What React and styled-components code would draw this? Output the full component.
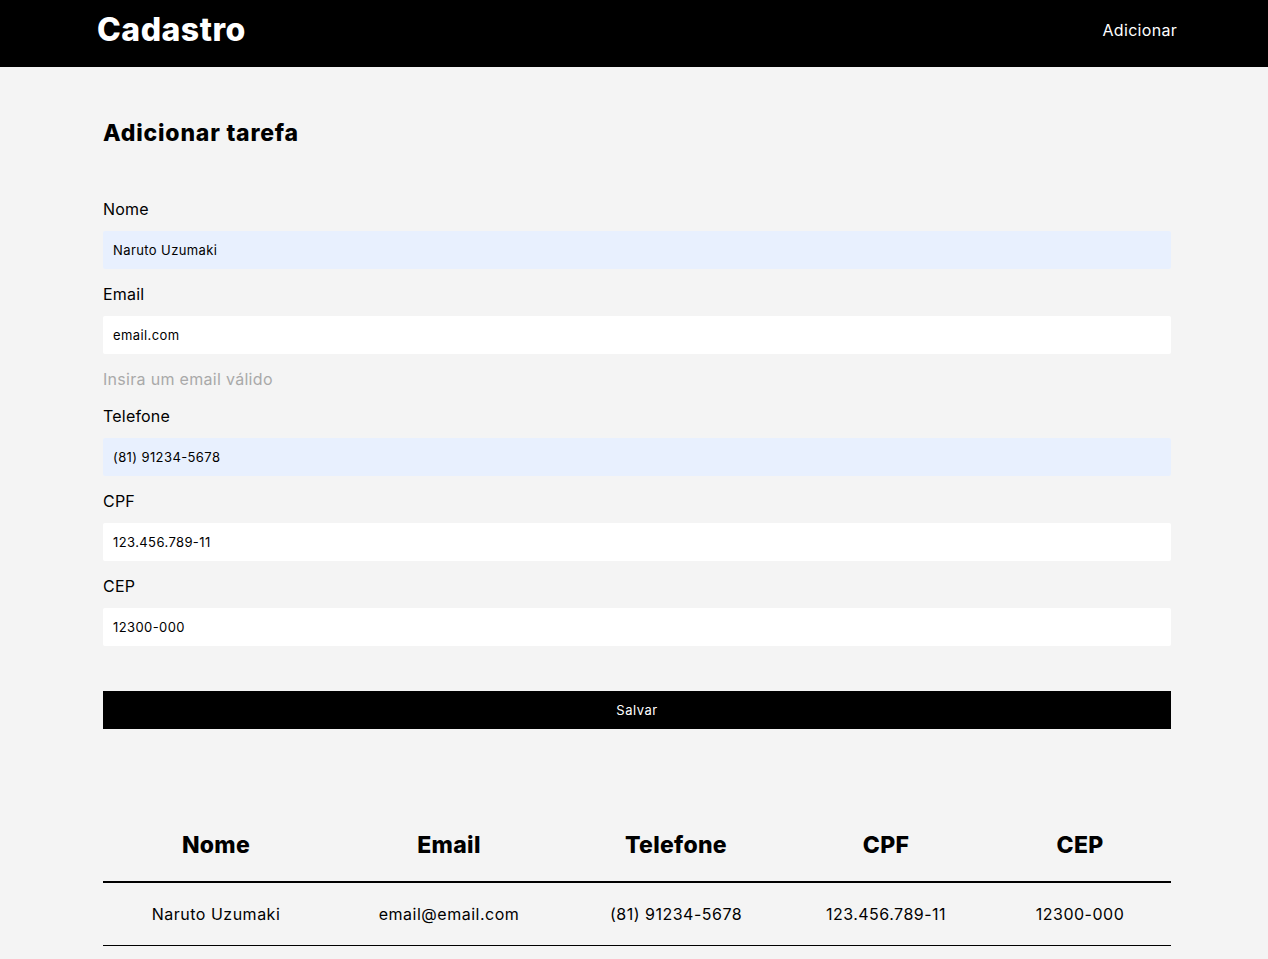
import styled, { createGlobalStyle } from "styled-components";

const GlobalStyle = createGlobalStyle`
  * { box-sizing: border-box; }
  body {
    margin: 0;
    background: #f4f4f4;
    font-family: "Inter", "Lato", sans-serif;
    color: #000;
  }
`;

const fields = [
  { label: "Nome", value: "Naruto Uzumaki", filled: true },
  { label: "Email", value: "email.com", error: "Insira um email válido" },
  { label: "Telefone", value: "(81) 91234-5678", filled: true },
  { label: "CPF", value: "123.456.789-11" },
  { label: "CEP", value: "12300-000" },
];

const columns = ["Nome", "Email", "Telefone", "CPF", "CEP"];
const rows = [
  ["Naruto Uzumaki", "email@email.com", "(81) 91234-5678", "123.456.789-11", "12300-000"],
];

export default function App() {
  return (
    <>
      <GlobalStyle />
      <Header>
        <Logo>Cadastro</Logo>
        <NavLink>Adicionar</NavLink>
      </Header>
      <Main>
        <Title>Adicionar tarefa</Title>
        <Form onSubmit={(e) => e.preventDefault()}>
          {fields.map((f) => (
            <Field key={f.label}>
              <Label>{f.label}</Label>
              <Input $filled={f.filled} defaultValue={f.value} />
              {f.error && <ErrorText>{f.error}</ErrorText>}
            </Field>
          ))}
          <SaveButton type="submit">Salvar</SaveButton>
        </Form>
        <Table>
          <HeadRow>
            {columns.map((c) => (
              <HeadCell key={c}>{c}</HeadCell>
            ))}
          </HeadRow>
          {rows.map((r, i) => (
            <BodyRow key={i}>
              {r.map((v, j) => (
                <Cell key={j}>{v}</Cell>
              ))}
            </BodyRow>
          ))}
        </Table>
      </Main>
    </>
  );
}

const Header = styled.header`
  height: 67px;
  background: #000;
  display: flex;
  align-items: center;
  justify-content: space-between;
  padding: 0 91px 8px 97px;
`;

const Logo = styled.h1`
  margin: 0;
  color: #fff;
  font-size: 32px;
  font-weight: 800;
  letter-spacing: 0.5px;
`;

const NavLink = styled.a`
  color: #fff;
  font-size: 16px;
  letter-spacing: 0.3px;
  cursor: pointer;
`;

const Main = styled.main`
  width: 1068px;
  margin-left: 103px;
  padding-top: 52px;
`;

const Title = styled.h2`
  margin: 0;
  font-size: 23px;
  font-weight: 800;
  letter-spacing: 0.8px;
  line-height: 28px;
`;

const Form = styled.form`
  margin-top: 52px;
  display: flex;
  flex-direction: column;
`;

const Field = styled.div`
  display: flex;
  flex-direction: column;
  margin-bottom: 15px;
`;

const Label = styled.label`
  font-size: 16px;
  letter-spacing: 0.2px;
  line-height: 20px;
  margin-bottom: 12px;
`;

const Input = styled.input`
  height: 38px;
  border: none;
  outline: none;
  border-radius: 2px;
  padding: 0 10px;
  font-family: inherit;
  font-size: 13px;
  letter-spacing: 0.4px;
  color: #000;
  background: ${({ $filled }) => ($filled ? "#e8f0fe" : "#fff")};
`;

const ErrorText = styled.span`
  margin: 15px 0 2px;
  font-size: 16px;
  letter-spacing: 0.3px;
  line-height: 20px;
  color: #a9a9a9;
`;

const SaveButton = styled.button`
  margin-top: 30px;
  height: 38px;
  border: none;
  background: #000;
  color: #fff;
  font-family: inherit;
  font-size: 13px;
  letter-spacing: 0.5px;
  cursor: pointer;
`;

const Table = styled.div`
  margin-top: 80px;
`;

const gridCols = "226px 240px 214px 206px 182px";

const HeadRow = styled.div`
  display: grid;
  grid-template-columns: ${gridCols};
  height: 74px;
  align-items: center;
  border-bottom: 2px solid #000;
`;

const HeadCell = styled.div`
  text-align: center;
  font-size: 23px;
  font-weight: 800;
  letter-spacing: 0.3px;
`;

const BodyRow = styled.div`
  display: grid;
  grid-template-columns: ${gridCols};
  height: 63px;
  align-items: center;
  border-bottom: 1px solid #000;
`;

const Cell = styled.div`
  text-align: center;
  font-size: 16px;
  letter-spacing: 0.5px;
`;
